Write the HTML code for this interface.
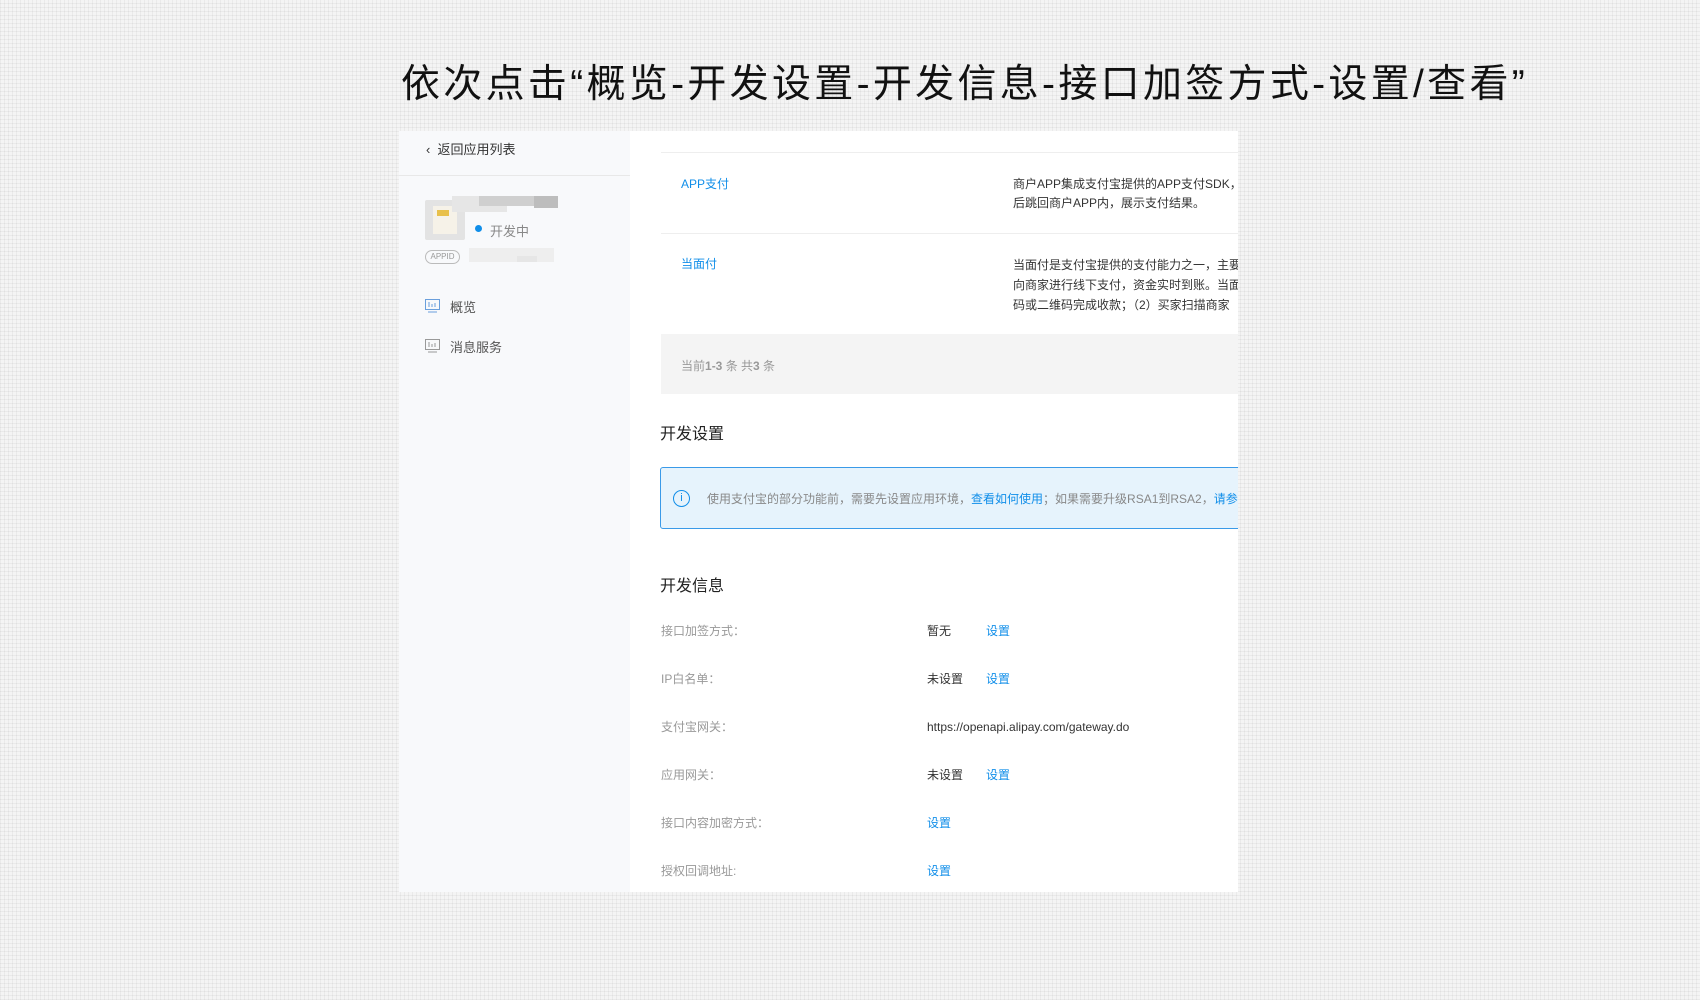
<!DOCTYPE html>
<html><head><meta charset="utf-8"><style>
*{margin:0;padding:0;box-sizing:border-box}
body{width:1700px;height:1000px;overflow:hidden;position:relative;font-family:"Liberation Sans","Noto Sans CJK SC",sans-serif;
background-color:#f4f4f4;
background-image:repeating-linear-gradient(0deg,rgba(0,0,0,.045) 0 1px,transparent 1px 4px),repeating-linear-gradient(90deg,rgba(0,0,0,.045) 0 1px,transparent 1px 4px);}
.a{position:absolute;white-space:nowrap}
.title{left:401px;top:53px;font-size:39px;color:#111;letter-spacing:3.3px}
.panel{left:399px;top:131px;width:839px;height:761px;background:#fff;overflow:hidden;position:absolute}
.side{position:absolute;left:0;top:0;width:231px;height:761px;background:#f8f9fb}
.p{position:absolute;white-space:nowrap;font-size:13px}
.blue{color:#108ee9}
.gray{color:#999}
.dark{color:#333}
.hr{position:absolute;height:1px;background:#eee}
</style></head><body>
<div class="a title">依次点击“概览-开发设置-开发信息-接口加签方式-设置/查看”</div>
<div class="panel">
 <div class="side">
  <div class="p dark" style="left:27px;top:8px">‹&nbsp;&nbsp;返回应用列表</div>
  <div class="hr" style="left:0;top:44px;width:231px;background:#e8e8e8"></div>
  <div style="position:absolute;left:26px;top:69px;width:40px;height:40px;background:#e3e3e3;border-radius:2px"><div style="position:absolute;left:8px;top:6px;width:24px;height:28px;background:#f6f2e8"></div><div style="position:absolute;left:12px;top:10px;width:12px;height:6px;background:#e8c04a"></div></div>
  <div style="position:absolute;left:53px;top:65px;width:55px;height:16px;background:#e6e6e6"></div>
  <div style="position:absolute;left:80px;top:65px;width:60px;height:10px;background:#cfcfcf"></div>
  <div style="position:absolute;left:135px;top:65px;width:24px;height:12px;background:#bdbdbd"></div>
  <div style="position:absolute;left:76px;top:94px;width:7px;height:7px;border-radius:50%;background:#108ee9"></div>
  <div class="p" style="left:91px;top:90px;color:#888">开发中</div>
  <div style="position:absolute;left:26px;top:119px;width:35px;height:14px;border:1px solid #bbb;border-radius:8px;font-size:8px;color:#999;text-align:center;line-height:12px">APPID</div>
  <div style="position:absolute;left:70px;top:117px;width:85px;height:14px;background:#eee"></div>
  <div style="position:absolute;left:118px;top:125px;width:20px;height:6px;background:#e6e6e6"></div>
  <svg style="position:absolute;left:26px;top:168px" width="15" height="14"><rect x="0.5" y="0.5" width="14" height="10" fill="none" stroke="#6a9fdc"/><path d="M4 3v5M7 5v3M10 4v4M3 13h9" stroke="#6a9fdc"/></svg>
  <div class="p" style="left:51px;top:166px;color:#555">概览</div>
  <svg style="position:absolute;left:26px;top:208px" width="15" height="14"><rect x="0.5" y="0.5" width="14" height="10" fill="none" stroke="#999"/><path d="M4 3v5M7 5v3M10 4v4M3 13h9" stroke="#999"/></svg>
  <div class="p" style="left:51px;top:206px;color:#555">消息服务</div>
 </div>
 <div class="hr" style="left:262px;top:21px;width:600px"></div>
 <div class="p blue" style="left:282px;top:44px;font-size:12px">APP支付</div>
 <div class="p dark" style="left:614px;top:44px;font-size:12px;line-height:19px">商户APP集成支付宝提供的APP支付SDK，<br>后跳回商户APP内，展示支付结果。</div>
 <div class="hr" style="left:262px;top:102px;width:600px"></div>
 <div class="p blue" style="left:282px;top:124px;font-size:12px">当面付</div>
 <div class="p dark" style="left:614px;top:124px;font-size:12px;line-height:20px">当面付是支付宝提供的支付能力之一，主要<br>向商家进行线下支付，资金实时到账。当面<br>码或二维码完成收款；（2）买家扫描商家</div>
 <div style="position:absolute;left:262px;top:203px;width:600px;height:60px;background:#f4f4f4"></div>
 <div class="p gray" style="left:282px;top:226px;font-size:12px">当前<b>1-3</b> 条 共<b>3</b> 条</div>
 <div class="p" style="left:261px;top:289px;font-size:16px;color:#222">开发设置</div>
 <div style="position:absolute;left:261px;top:336px;width:600px;height:62px;background:#e6f3fc;border:1px solid #3a9ae8;border-radius:3px"></div>
 <div style="position:absolute;left:274px;top:359px;width:17px;height:17px;border:1.5px solid #108ee9;border-radius:50%;color:#108ee9;font-size:11px;text-align:center;line-height:14px">i</div>
 <div class="p" style="left:308px;top:359px;font-size:12px;color:#888">使用支付宝的部分功能前，需要先设置应用环境，<span class="blue">查看如何使用</span>；如果需要升级RSA1到RSA2，<span class="blue">请参考</span></div>
 <div class="p" style="left:261px;top:441px;font-size:16px;color:#222">开发信息</div>
 <div class="p gray" style="left:262px;top:491px;font-size:12px">接口加签方式：</div><div class="p dark" style="left:528px;top:491px;font-size:12px">暂无</div><div class="p blue" style="left:587px;top:491px;font-size:12px">设置</div>
 <div class="p gray" style="left:262px;top:539px;font-size:12px">IP白名单：</div><div class="p dark" style="left:528px;top:539px;font-size:12px">未设置</div><div class="p blue" style="left:587px;top:539px;font-size:12px">设置</div>
 <div class="p gray" style="left:262px;top:587px;font-size:12px">支付宝网关：</div><div class="p dark" style="left:528px;top:589px;font-size:12px">https://openapi.alipay.com/gateway.do</div>
 <div class="p gray" style="left:262px;top:635px;font-size:12px">应用网关：</div><div class="p dark" style="left:528px;top:635px;font-size:12px">未设置</div><div class="p blue" style="left:587px;top:635px;font-size:12px">设置</div>
 <div class="p gray" style="left:262px;top:683px;font-size:12px">接口内容加密方式：</div><div class="p blue" style="left:528px;top:683px;font-size:12px">设置</div>
 <div class="p gray" style="left:262px;top:731px;font-size:12px">授权回调地址:</div><div class="p blue" style="left:528px;top:731px;font-size:12px">设置</div>
</div>
</body></html>
